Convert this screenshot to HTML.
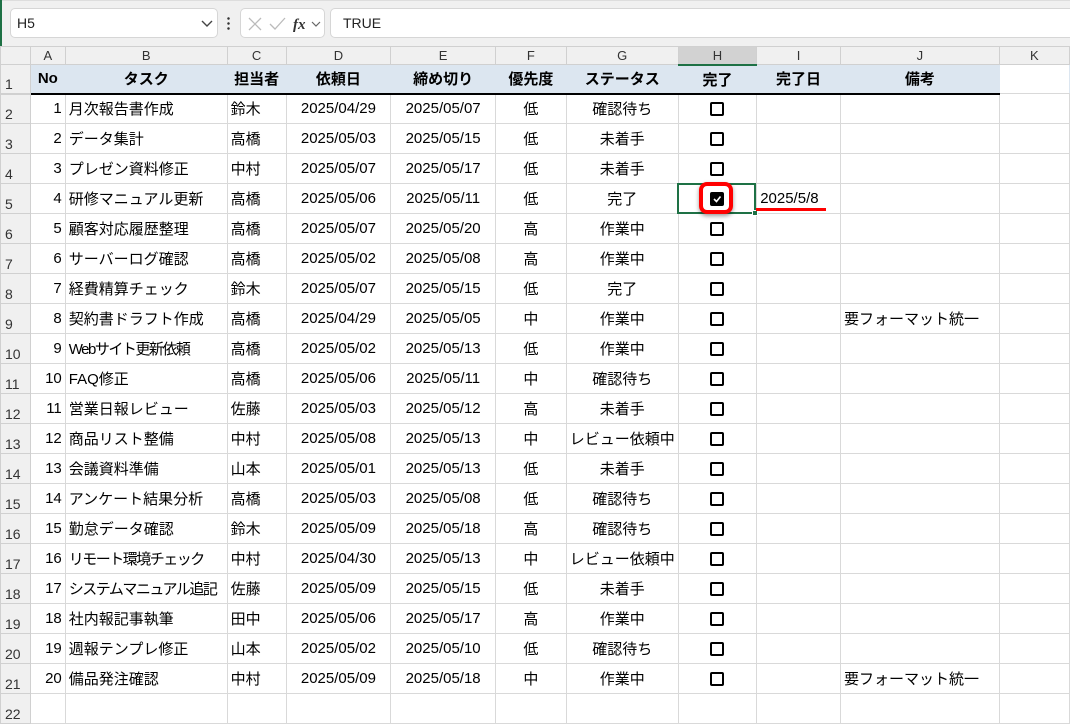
<!DOCTYPE html>
<html><head><meta charset="utf-8"><style>
*{box-sizing:border-box;margin:0;padding:0}
body{width:1070px;height:723px;overflow:hidden;background:#fff;font-family:"Liberation Sans","Noto Sans CJK JP",sans-serif;position:relative}
.top{position:absolute;left:0;top:0;width:1070px;height:46px;background:#f0f0f0;border-top:1px solid #ddd}
.box{position:absolute;top:8px;height:30px;background:#fff;border:1px solid #d6d6d6;border-radius:5px}
.green{position:absolute;left:0;top:0;width:2px;height:723px;background:#1e7145}
table{position:absolute;left:0;top:46px;border-collapse:collapse;table-layout:fixed;font-size:15px;color:#000}
td{border:1px solid #d9d9d9;height:30px;padding:0 3px;white-space:nowrap;overflow:hidden}
tr.ch td{height:18px;background:#f0f0f0;text-align:center;color:#333;font-size:13px;border-color:#d0d0d0;padding:0}
td.rh{background:#f0f0f0;color:#333;font-size:14px;vertical-align:bottom;padding:0 0 1px 4px;border-color:#d0d0d0}
tr.h1 td{height:29px;background:#dce6f0;font-weight:bold;text-align:center;border-left-color:#dce6f0;border-right-color:#dce6f0;border-bottom:2px solid #000}
tr.h1 td.rh{background:#f0f0f0;font-weight:normal;text-align:left;border-color:#d0d0d0}
tr.h1 td.nob{background:#fff;border-bottom:1px solid #d9d9d9;border-left-color:#d9d9d9}
.c{text-align:center}.r{text-align:right}
.cb{display:inline-block;width:14px;height:14px;border:2px solid #000;border-radius:2px;vertical-align:middle}
</style></head><body>
<div class="top"></div>
<div class="box" style="left:10px;width:208px"><span style="position:absolute;left:6px;top:6px;font-size:14px;color:#222">H5</span><svg style="position:absolute;right:4px;top:10px" width="12" height="8"><path d="M1 2 L6 7 L11 2" stroke="#444" fill="none" stroke-width="1.4"/></svg></div>
<div style="position:absolute;left:227px;top:16px;width:3px;height:14px;background:radial-gradient(circle,#333 1px,transparent 1.5px) 0 0/3px 5px"></div>
<div class="box" style="left:240px;width:85px"><svg style="position:absolute;left:5px;top:6px" width="80" height="18"><path d="M3 3 L15 15 M15 3 L3 15" stroke="#bbb" stroke-width="1.3"/><path d="M24 9 L29 14 L39 3" stroke="#bbb" stroke-width="1.3" fill="none"/><text x="47" y="14" font-family="Liberation Serif" font-style="italic" font-weight="bold" font-size="15" fill="#333">fx</text><path d="M66 7 L70 11 L74 7" stroke="#666" fill="none" stroke-width="1.2"/></svg></div>
<div class="box" style="left:330px;width:745px"><span style="position:absolute;left:12px;top:6px;font-size:14px;color:#222">TRUE</span></div>
<div class="green"></div>
<table>
<colgroup><col style="width:30px"><col style="width:35px"><col style="width:162px"><col style="width:59px"><col style="width:105px"><col style="width:105px"><col style="width:71px"><col style="width:110px"><col style="width:79px"><col style="width:84px"><col style="width:159px"><col style="width:71px"></colgroup>
<tr class="ch"><td></td><td>A</td><td>B</td><td>C</td><td>D</td><td>E</td><td>F</td><td>G</td><td style="background:#d2d2d2;border-bottom:2px solid #1e7145">H</td><td>I</td><td>J</td><td>K</td></tr>
<tr class="h1"><td class="rh">1</td><td>No</td><td>タスク</td><td>担当者</td><td>依頼日</td><td>締め切り</td><td>優先度</td><td>ステータス</td><td>完了</td><td>完了日</td><td>備考</td><td class="nob"></td></tr>
<tbody id="b"></tbody>
</table>
<div style="position:absolute;left:677px;top:183px;width:79px;height:31px;border:2px solid #1e7145"></div>
<div style="position:absolute;left:752px;top:210px;width:6px;height:6px;background:#1e7145;border:1px solid #fff"></div>
<div style="position:absolute;left:699px;top:182px;width:34px;height:32px;border:4px solid #f00;border-radius:8px;box-shadow:0 2px 4px rgba(0,0,0,.4)"></div>
<div style="position:absolute;left:756px;top:208px;width:70px;height:3px;background:#f00"></div>
<script>
const d=[["月次報告書作成","鈴木","2025/04/29","2025/05/07","低","確認待ち",""],
["データ集計","高橋","2025/05/03","2025/05/15","低","未着手",""],
["プレゼン資料修正","中村","2025/05/07","2025/05/17","低","未着手",""],
["研修マニュアル更新","高橋","2025/05/06","2025/05/11","低","完了",""],
["顧客対応履歴整理","高橋","2025/05/07","2025/05/20","高","作業中",""],
["サーバーログ確認","高橋","2025/05/02","2025/05/08","高","作業中",""],
["経費精算チェック","鈴木","2025/05/07","2025/05/15","低","完了",""],
["契約書ドラフト作成","高橋","2025/04/29","2025/05/05","中","作業中","要フォーマット統一"],
["Webサイト更新依頼","高橋","2025/05/02","2025/05/13","低","作業中",""],
["FAQ修正","高橋","2025/05/06","2025/05/11","中","確認待ち",""],
["営業日報レビュー","佐藤","2025/05/03","2025/05/12","高","未着手",""],
["商品リスト整備","中村","2025/05/08","2025/05/13","中","レビュー依頼中",""],
["会議資料準備","山本","2025/05/01","2025/05/13","低","未着手",""],
["アンケート結果分析","高橋","2025/05/03","2025/05/08","低","確認待ち",""],
["勤怠データ確認","鈴木","2025/05/09","2025/05/18","高","確認待ち",""],
["リモート環境チェック","中村","2025/04/30","2025/05/13","中","レビュー依頼中",""],
["システムマニュアル追記","佐藤","2025/05/09","2025/05/15","低","未着手",""],
["社内報記事執筆","田中","2025/05/06","2025/05/17","高","作業中",""],
["週報テンプレ修正","山本","2025/05/02","2025/05/10","低","確認待ち",""],
["備品発注確認","中村","2025/05/09","2025/05/18","中","作業中","要フォーマット統一"]];
let h="";d.forEach((r,i)=>{const ck=i==3?'<span class="cb" style="background:#000;position:relative"><svg style="position:absolute;left:0;top:0" width="10" height="10"><path d="M2 5 L4.5 7.5 L8.5 2.5" stroke="#fff" stroke-width="1.6" fill="none"/></svg></span>':'<span class="cb"></span>';
const b=r[0].length>=10?' style="letter-spacing:-1.5px"':'';
h+=`<tr><td class="rh">${i+2}</td><td class="r">${i+1}</td><td${b}>${r[0]}</td><td>${r[1]}</td><td class="c">${r[2]}</td><td class="c">${r[3]}</td><td class="c">${r[4]}</td><td class="c">${r[5]}</td><td class="c">${ck}</td><td>${i==3?'2025/5/8':''}</td><td>${r[6]}</td><td></td></tr>`});
h+='<tr><td class="rh">22</td><td></td><td></td><td></td><td></td><td></td><td></td><td></td><td></td><td></td><td></td><td></td></tr>';
document.getElementById("b").innerHTML=h;
</script>
</body></html>
